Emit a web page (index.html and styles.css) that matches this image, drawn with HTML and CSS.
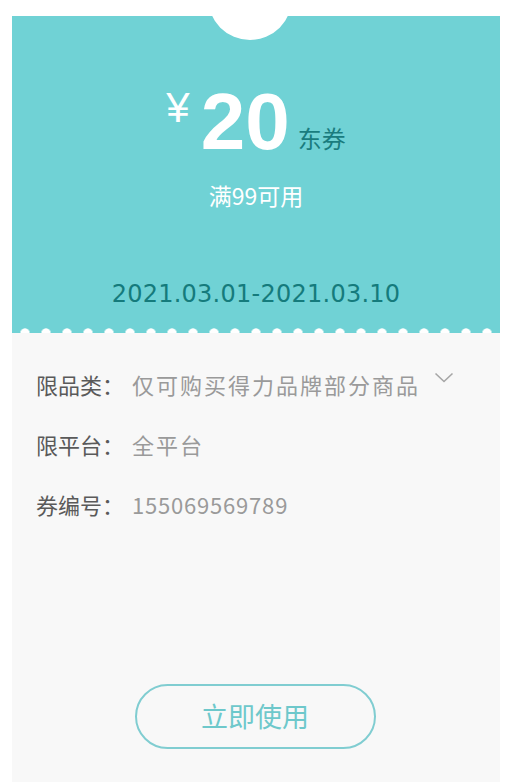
FILE: index.html
```html
<!DOCTYPE html>
<html lang="zh-CN">
<head>
<meta charset="utf-8">
<title>优惠券</title>
<link rel="stylesheet" href="styles.css">
</head>
<body>
<div class="card">
  <div class="top">
    <div class="price">
      <span class="yen">¥</span>
      <span class="amount">20</span>
      <span class="unit">东券</span>
    </div>
    <div class="cond">满99可用</div>
    <div class="date">2021.03.01-2021.03.10</div>
  </div>
  <div class="info">
    <div class="row">
      <span class="label">限品类：</span>
      <span class="value">仅可购买得力品牌部分商品</span>
      <svg class="chev" width="20" height="11" viewBox="0 0 20 11"><polyline points="1.5,1.5 10,9.5 18.5,1.5" fill="none" stroke="#a6a6a6" stroke-width="1.6"/></svg>
    </div>
    <div class="row">
      <span class="label">限平台：</span>
      <span class="value">全平台</span>
    </div>
    <div class="row">
      <span class="label">券编号：</span>
      <span class="value num">155069569789</span>
    </div>
    <div class="btn-wrap">
      <div class="btn">立即使用</div>
    </div>
  </div>
</div>
</body>
</html>
```

FILE: styles.css
```css
html, body {
  margin: 0;
  padding: 0;
  background: #ffffff;
}
body {
  font-family: "Noto Sans CJK SC", "Noto Sans", sans-serif;
}
.card {
  margin: 16px 12px 0;
  width: 488px;
}
.top {
  position: relative;
  height: 317px;
  box-sizing: border-box;
  padding-top: 66px;
  background: #70d2d5;
  display: flex;
  flex-direction: column;
  align-items: center;
}
.top::before {
  content: "";
  position: absolute;
  left: 196px;
  top: -60px;
  width: 84px;
  height: 84px;
  border-radius: 50%;
  background: #ffffff;
}
.top::after {
  content: "";
  position: absolute;
  left: 0;
  right: 0;
  bottom: 0;
  height: 5px;
  background-image: radial-gradient(circle at 50% 100%, #ffffff 4.3px, rgba(255,255,255,0) 5px);
  background-size: 21px 5px;
  background-position: 2.5px 0;
  background-repeat: repeat-x;
}
.price {
  display: flex;
  align-items: flex-start;
  height: 80px;
}
.yen {
  font-family: "Liberation Sans", Arial, sans-serif;
  font-size: 42px;
  line-height: 42px;
  color: #ffffff;
  margin-top: 5px;
  margin-right: 11px;
}
.amount {
  font-family: "Liberation Sans", Arial, sans-serif;
  font-weight: bold;
  font-size: 80px;
  line-height: 80px;
  color: #ffffff;
  margin-right: 8px;
}
.unit {
  font-size: 24px;
  line-height: 24px;
  color: #1a7c7e;
  margin-top: 44px;
}
.cond {
  margin-top: 18px;
  font-size: 23px;
  line-height: 30px;
  color: #ffffff;
}
.date {
  margin-top: 70px;
  font-family: "DejaVu Sans", Verdana, sans-serif;
  font-size: 24px;
  line-height: 28px;
  letter-spacing: 0.25px;
  color: #157b7c;
}
.info {
  background: #f8f8f8;
  height: 449px;
  box-sizing: border-box;
  padding: 36px 24px 0;
  display: flex;
  flex-direction: column;
  gap: 30px;
}
.row {
  display: flex;
  align-items: flex-start;
  height: 30px;
}
.label {
  font-size: 22px;
  line-height: 30px;
  color: #5a5a5a;
  white-space: nowrap;
}
.value {
  font-size: 22px;
  line-height: 30px;
  color: #9a9a9a;
  letter-spacing: 2px;
  margin-left: 8px;
  white-space: nowrap;
}
.value.num {
  letter-spacing: 0.8px;
}
.chev {
  margin-left: 14px;
  margin-top: 3px;
}
.btn-wrap {
  display: flex;
  justify-content: center;
  margin-top: 135px;
}
.btn {
  width: 241px;
  height: 65px;
  box-sizing: border-box;
  border: 2px solid #80cdd1;
  border-radius: 33px;
  display: flex;
  align-items: center;
  justify-content: center;
  padding-bottom: 3px;
  font-size: 27px;
  color: #6ec8cb;
  margin-left: -2px;
}
```
